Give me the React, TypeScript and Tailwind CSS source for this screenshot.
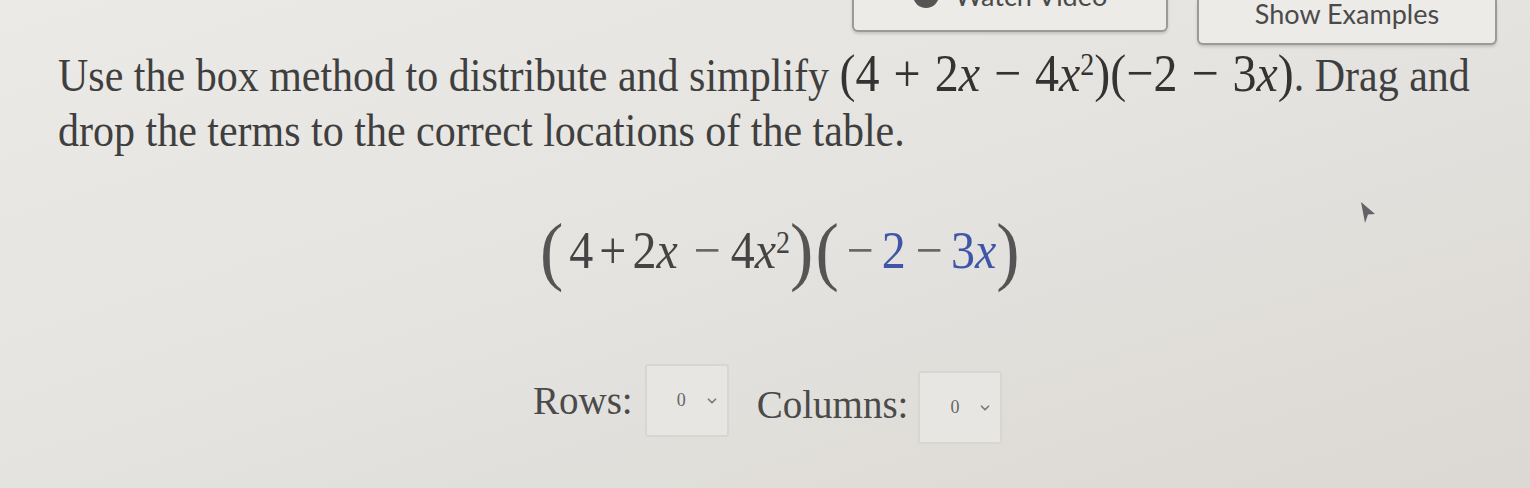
import { ChevronDown } from 'lucide-react'

const serif = { fontFamily: '"Liberation Serif", "Times New Roman", serif' }

function TopButton({ label, icon, className }: { label: string; icon?: boolean; className: string }) {
  return (
    <div
      className={`flex items-center justify-center gap-4 rounded-md border-2 border-[#9a9a98] bg-[#ecebe8] text-[27px] leading-none text-[#4a4a4a] shadow-[0_2px_3px_rgba(0,0,0,0.15)] ${className}`}
      style={{ fontFamily: 'Lato, "Open Sans", sans-serif' }}
    >
      {icon && <span className="h-[26px] w-[26px] rounded-full bg-[#555]" />}
      <span>{label}</span>
    </div>
  )
}

function Select({ className }: { className?: string }) {
  return (
    <div className={`flex h-[73px] w-[84px] items-center justify-between rounded-[3px] border-2 border-[#d6d6d3] bg-[#e7e6e3] pl-[30px] pr-[8px] ${className ?? ''}`}>
      <span className="text-[18px] text-[#666]" style={serif}>0</span>
      <ChevronDown size={14} strokeWidth={3} className="text-[#7a7a7a]" />
    </div>
  )
}

const X = () => <span className="italic">x</span>
const Op = ({ children }: { children: string }) => <span className="mx-[14px] inline-block">{children}</span>

export default function App() {
  return (
    <div className="relative h-[488px] w-[1530px] overflow-hidden bg-gradient-to-br from-[#eceae7] via-[#e4e3df] to-[#dcd8d3] text-[#3f3f3f]">
      {/* top buttons, clipped by the screen edge */}
      <div className="flex h-[45px] items-start justify-end gap-[29px] pr-[33px]">
        <TopButton label="Watch Video" icon className="-mt-[42px] h-[74px] w-[316px]" />
        <TopButton label="Show Examples" className="h-[45px] w-[300px] rounded-t-none border-t-0 pb-[17px]" />
      </div>

      {/* prompt */}
      <p className="origin-top-left scale-y-[1.12] pl-[58px] text-[42px] leading-[49px]" style={serif}>
        Use the box method to distribute and simplify{' '}
        <span className="text-[48px] text-[#333]">
          (4<Op>+</Op>2<X /><Op>−</Op>4<X /><sup className="text-[28px]">2</sup>)(−2<Op>−</Op>3<X />)
        </span>
        . Drag and
        <br />
        drop the terms to the correct locations of the table.
      </p>

      {/* display expression */}
      <div className="mt-[65px] flex origin-top-left scale-y-[1.1] items-center pl-[540px] text-[48px] text-[#444]" style={serif}>
        <span className="text-[70px] font-light leading-none text-[#555]">(</span>
        <span className="ml-[6px]">4</span>
        <span className="ml-[6px]">+</span>
        <span className="ml-[6px]">2<X /></span>
        <span className="ml-[16px] text-[#666]">−</span>
        <span className="ml-[10px]">4<X /><sup className="text-[28px]">2</sup></span>
        <span className="text-[70px] font-light leading-none text-[#555]">)</span>
        <span className="ml-[2px] text-[70px] font-light leading-none text-[#555]">(</span>
        <span className="ml-[8px] text-[#666]">−</span>
        <span className="ml-[8px] text-[#3f56a8]">2</span>
        <span className="ml-[10px] text-[#666]">−</span>
        <span className="ml-[8px] text-[#3f56a8]">3<X /></span>
        <span className="text-[70px] font-light leading-none text-[#555]">)</span>
      </div>

      {/* rows / columns */}
      <div className="mt-[81px] flex items-start pl-[533px] text-[39px] text-[#4a4a4a]" style={serif}>
        <span className="mt-[8px]">Rows:</span>
        <Select className="ml-[12px]" />
        <span className="ml-[28px] mt-[12px]">Columns:</span>
        <Select className="ml-[10px] mt-[7px]" />
      </div>

      {/* mouse pointer */}
      <svg className="absolute left-[1356px] top-[200px]" width="22" height="26" viewBox="0 0 22 26">
        <path d="M5 2 L19 14 L12 14.5 L9 23 Z" fill="#4d4b55" opacity="0.85" />
      </svg>
    </div>
  )
}
